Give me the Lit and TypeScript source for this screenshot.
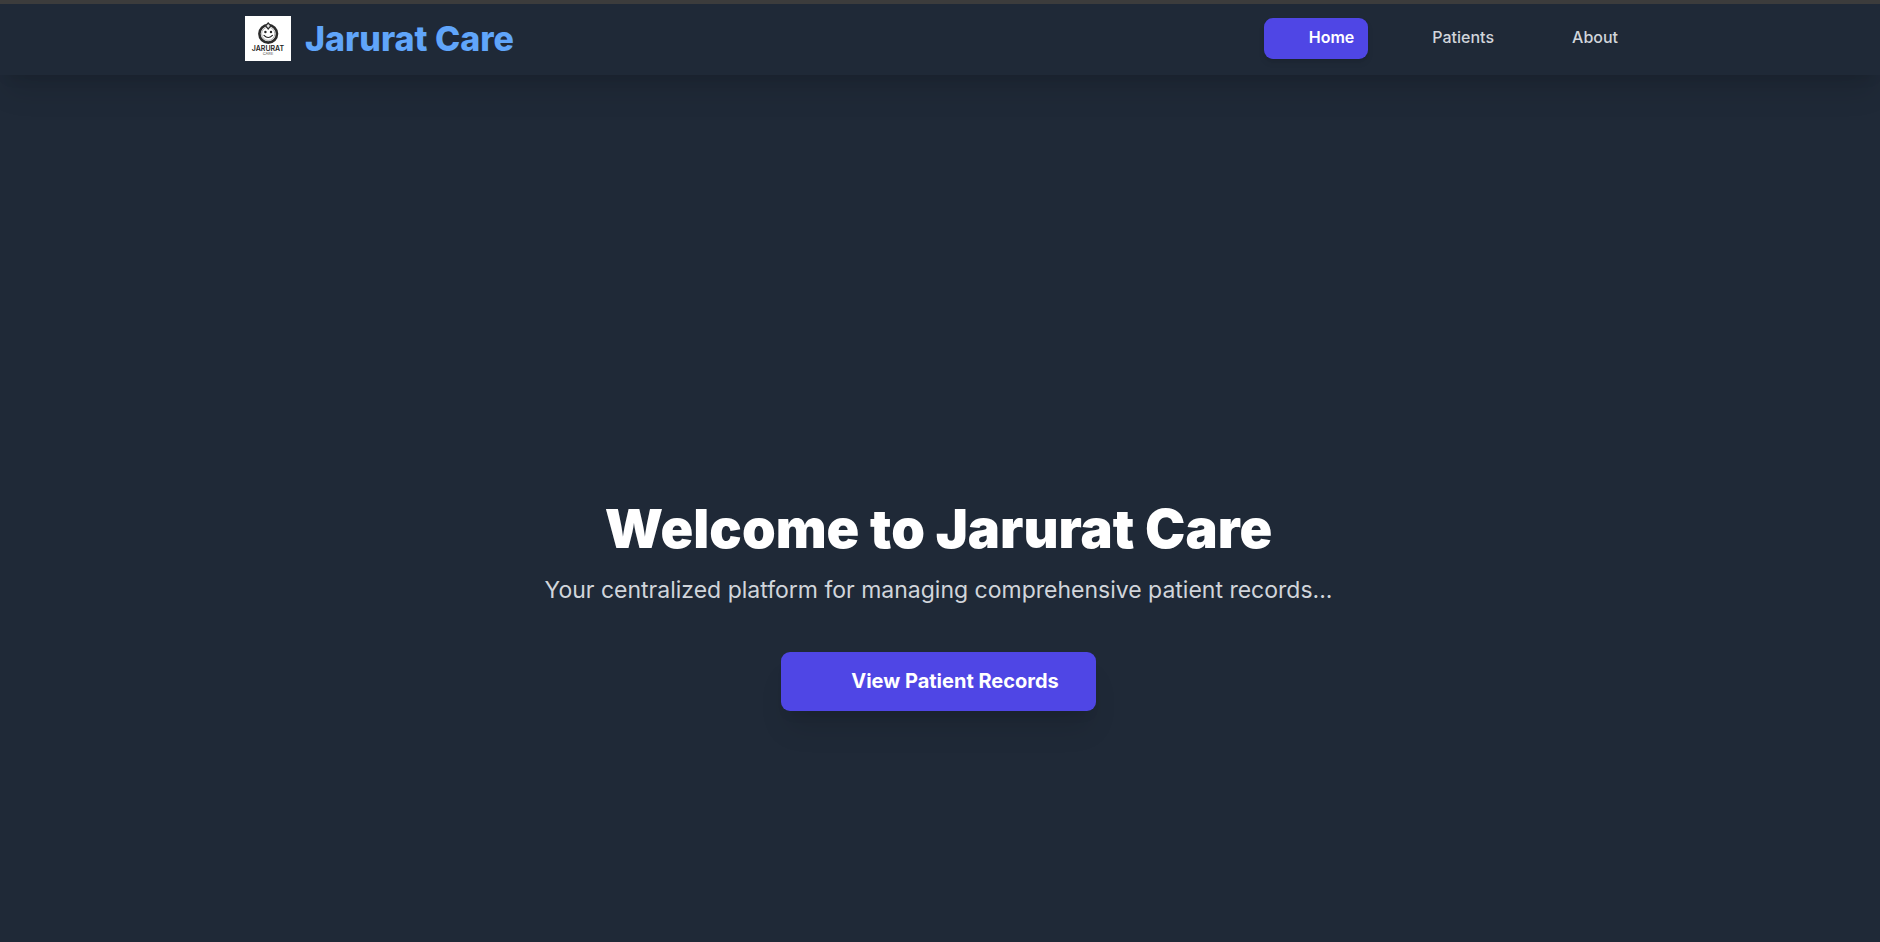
import { LitElement, html, css } from "lit";
import { customElement, state } from "lit/decorators.js";

@customElement("brand-logo")
class BrandLogo extends LitElement {
  static styles = css`
    :host { display: block; }
    .mark { display: block; width: 46px; height: 45px; }
    .name { font: 600 7px Inter, sans-serif; fill: #222; }
    .sub { font: 400 4px Inter, sans-serif; fill: #555; }
  `;
  render() {
    return html`<svg class="mark" viewBox="0 0 46 45" role="img" aria-label="Jarurat Care logo">
      <rect width="46" height="45" fill="#fff" />
      <circle cx="23.2" cy="17.8" r="8.8" fill="#fff" stroke="#2b2b2b" stroke-width="2.6" />
      <circle cx="23.2" cy="17.8" r="6.6" fill="none" stroke="#9a9a9a" stroke-width="0.8" />
      <path d="M23.2 7 L25.8 9.8 L23.2 13 L20.6 9.8 Z" fill="#ddd" stroke="#2b2b2b" stroke-width="1.2" />
      <circle cx="20.4" cy="16" r="1.2" fill="#222" />
      <circle cx="26" cy="16" r="1.2" fill="#222" />
      <path d="M19 19.4 Q23.2 23.6 27.4 19.4" fill="none" stroke="#222" stroke-width="1.2" stroke-linecap="round" />
      <text class="name" x="23" y="35" text-anchor="middle">JARURAT</text>
      <text class="sub" x="23" y="39" text-anchor="middle">CARE</text>
    </svg>`;
  }
}

@customElement("app-root")
class AppRoot extends LitElement {
  static styles = css`
    :host {
      display: flex;
      flex-direction: column;
      min-height: 100vh;
      box-sizing: border-box;
      border-top: 4px solid #3c3c3c;
      padding-right: 3px;
      background: #1f2937;
      font-family: Inter, sans-serif;
      color: #fff;
    }
    .bar {
      margin-right: -3px;
      padding-right: 3px;
      background: #1f2937;
      box-shadow: 0 23px 29px -6px rgba(0, 0, 0, 0.1), 0 9px 12px -7px rgba(0, 0, 0, 0.1);
    }
    .inner {
      max-width: 1387px;
      margin: 0 auto;
      padding: 12px 0 14px;
      display: flex;
      align-items: center;
      justify-content: space-between;
    }
    .brand {
      display: flex;
      align-items: center;
      gap: 14px;
      color: #60a5fa;
      font-size: 34px;
      line-height: 40px;
      font-weight: 800;
      text-decoration: none;
    }
    .links { display: flex; gap: 19px; }
    .link {
      padding: 7px 14px 10px 45px;
      border-radius: 9px;
      font-size: 16px;
      line-height: 24px;
      font-weight: 500;
      color: #d1d5db;
      text-decoration: none;
    }
    .active {
      background: #4f46e5;
      color: #fff;
      font-weight: 600;
      box-shadow: 0 4px 7px -1px rgba(0, 0, 0, 0.1), 0 2px 4px -2px rgba(0, 0, 0, 0.1);
    }
    .hero {
      flex: 1;
      display: flex;
      flex-direction: column;
      align-items: center;
      justify-content: center;
      padding-top: 195px;
      text-align: center;
    }
    .title { margin: 0 0 17px; font-size: 54px; line-height: 56px; font-weight: 900; }
    .text { margin: 0 0 46px; font-size: 23px; line-height: 32px; color: #d1d5db; }
    .cta {
      border: 0;
      padding: 14px 37px 15px 70px;
      border-radius: 9px;
      background: #4f46e5;
      color: #fff;
      font-family: inherit;
      font-size: 20px;
      line-height: 30px;
      font-weight: 700;
      cursor: pointer;
      box-shadow: 0 23px 29px -6px rgba(0, 0, 0, 0.1), 0 9px 12px -7px rgba(0, 0, 0, 0.1);
    }
  `;

  @state() page = "Home";

  render() {
    return html`
      <header class="bar">
        <div class="inner">
          <a class="brand" href="#home"><brand-logo></brand-logo><span>Jarurat Care</span></a>
          <nav class="links">
            ${["Home", "Patients", "About"].map(
              (name) => html`<a
                class="link ${this.page === name ? "active" : ""}"
                href="#${name.toLowerCase()}"
                @click=${() => (this.page = name)}
              >${name}</a>`
            )}
          </nav>
        </div>
      </header>
      <main class="hero">
        <h1 class="title">Welcome to Jarurat Care</h1>
        <p class="text">Your centralized platform for managing comprehensive patient records...</p>
        <button class="cta" @click=${() => (this.page = "Patients")}>View Patient Records</button>
      </main>
    `;
  }
}
